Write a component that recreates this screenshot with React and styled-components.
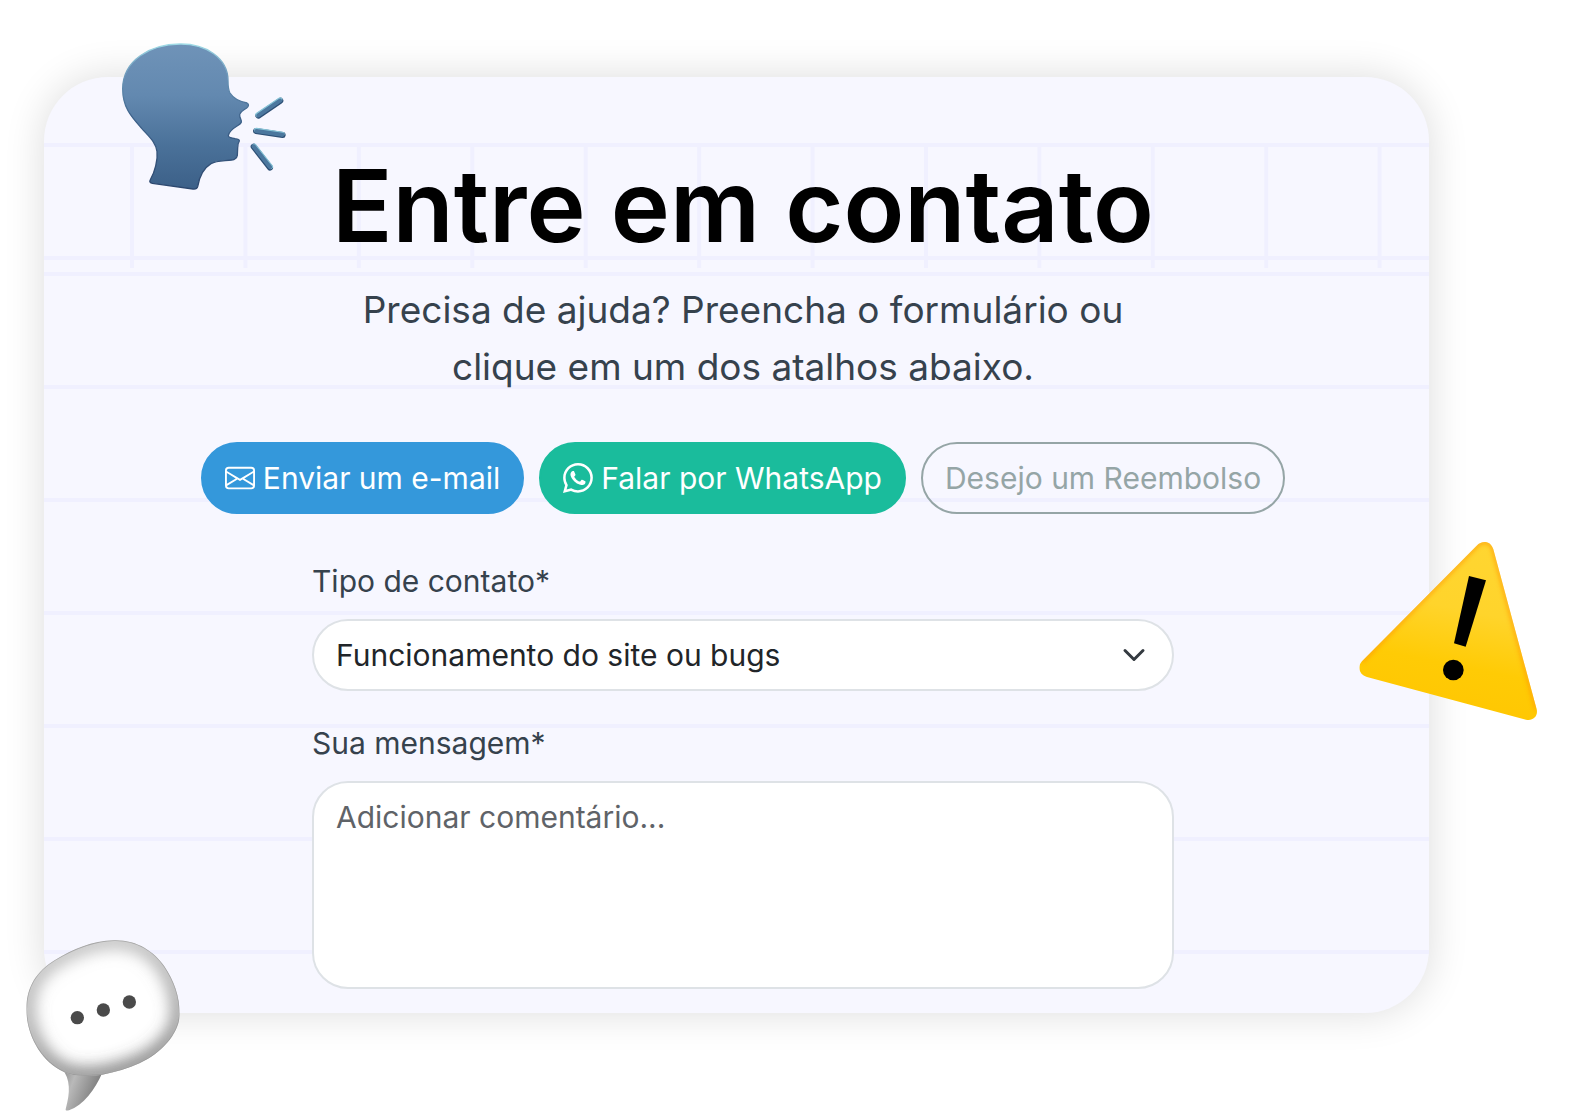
// App.jsx
import React, { useState } from "react";
import styled, { createGlobalStyle } from "styled-components";
import { BsEnvelope, BsWhatsapp } from "react-icons/bs";

const subjects = [
  "Funcionamento do site ou bugs",
  "Dúvidas sobre pagamento",
  "Sugestões",
  "Outros assuntos",
];

function SpeakingHead() {
  return (
    <HeadArt viewBox="300 60 501 456" aria-hidden="true">
      <defs>
        <linearGradient id="headFill" x1="0" y1="0" x2="0" y2="1">
          <stop offset="0" stopColor="#6f93b8" />
          <stop offset="0.35" stopColor="#6389b0" />
          <stop offset="0.7" stopColor="#4a7199" />
          <stop offset="1" stopColor="#3c6088" />
        </linearGradient>
        <linearGradient id="headEdge" x1="0" y1="0" x2="0" y2="1">
          <stop offset="0" stopColor="#9fdbe6" />
          <stop offset="0.2" stopColor="#6f9cbd" />
          <stop offset="0.5" stopColor="#3d628a" />
          <stop offset="1" stopColor="#2c476e" />
        </linearGradient>
      </defs>
      <path
        fill="url(#headFill)"
        stroke="url(#headEdge)"
        strokeWidth="4"
        strokeLinejoin="round"
        d="M480 72C555 71 624 112 624 182C624 202 625 210 630 219C640 235 662 245 681 249C688 252 686 259 680 264C671 271 661 274 659 283C658 294 665 298 664 306C661 318 631 322 625 346C624 354 636 353 645 356C655 358 659 360 658 363C654 369 653 374 653 384L652 406C650 415 644 419 635 420C612 423 590 421 573 431C550 445 538 470 533 500C531 507 527 508 519 507L397 490C388 488 388 484 392 477C404 456 414 420 411 394C407 366 388 351 365 325C336 292 308 264 308 206C309 120 390 73 480 72Z"
      />
      <g strokeLinecap="round">
        <g stroke="#2e5076" strokeWidth="18">
          <path d="M715 287L781 242M708 333L788 345M701 380L750 443" />
        </g>
        <g stroke="#86c3d6" strokeWidth="14">
          <path d="M713 284L780 239M709 330L787 342M703 378L752 440" />
        </g>
        <g stroke="#4b779e" strokeWidth="12">
          <path d="M715 286L780 242M709 333L787 344M701 379L750 441" />
        </g>
      </g>
    </HeadArt>
  );
}

function WarningSign() {
  return (
    <WarningArt viewBox="55 60 540 546" aria-hidden="true">
      <defs>
        <linearGradient id="signFill" x1="0.6" y1="0" x2="0.4" y2="1">
          <stop offset="0" stopColor="#ffd633" />
          <stop offset="0.4" stopColor="#ffd42b" />
          <stop offset="0.65" stopColor="#ffcb05" />
          <stop offset="1" stopColor="#ffc400" />
        </linearGradient>
        <clipPath id="signClip">
          <path d="M411 77C428 59 454 63 461 88L591 568C596 588 580 604 559 599L82 471C59 465 52 440 67 424Z" />
        </clipPath>
        <filter id="signBlur">
          <feGaussianBlur stdDeviation="7" />
        </filter>
      </defs>
      <g clipPath="url(#signClip)">
        <path fill="url(#signFill)" d="M0 0H660V660H0Z" />
        <path
          fill="none"
          stroke="#ff9d0a"
          strokeWidth="12"
          opacity="0.75"
          filter="url(#signBlur)"
          d="M67 424L411 77C428 59 454 63 461 88L591 568"
        />
      </g>
      <path d="M388 168L439 181L378 380L343 370Z" />
      <circle cx="341" cy="450" r="31" />
    </WarningArt>
  );
}

const balloonShape =
  "M342 62C410 60 462 95 493 140C522 183 539 230 539 283C539 340 485 400 420 430C385 446 345 458 307 465C265 469 225 472 192 457C122 425 79 345 79 268C79 205 108 155 165 121C220 88 275 64 342 62Z";

function SpeechBalloon() {
  return (
    <BalloonArt viewBox="75 55 468 522" aria-hidden="true">
      <defs>
        <clipPath id="balloonClip">
          <path d={balloonShape} />
        </clipPath>
        <linearGradient id="tailFill" x1="0" y1="0" x2="1" y2="0.4">
          <stop offset="0" stopColor="#8a8a8a" />
          <stop offset="0.35" stopColor="#b9b9b9" />
          <stop offset="1" stopColor="#777777" />
        </linearGradient>
        <linearGradient id="balloonEdge" x1="0.2" y1="0" x2="0.5" y2="1">
          <stop offset="0" stopColor="#a8a8a8" />
          <stop offset="0.5" stopColor="#8a8a8a" />
          <stop offset="1" stopColor="#4c4c4c" />
        </linearGradient>
        <filter id="balloonBlur" x="-30%" y="-30%" width="160%" height="160%">
          <feGaussianBlur stdDeviation="25" />
        </filter>
      </defs>
      <path
        fill="url(#tailFill)"
        d="M185 445C213 480 210 520 198 564C195 573 198 574 207 572C250 557 285 510 307 459Z"
      />
      <g clipPath="url(#balloonClip)">
        <path fill="#ffffff" d="M0 0H600V600H0Z" />
        <path
          fill="none"
          stroke="url(#balloonEdge)"
          strokeWidth="34"
          filter="url(#balloonBlur)"
          d={balloonShape}
        />
        <path fill="none" stroke="#8c8c8c" strokeWidth="4" opacity="0.6" d={balloonShape} />
      </g>
      <g fill="#4a4a4a">
        <circle cx="232" cy="294" r="20" />
        <circle cx="310" cy="271" r="20" />
        <circle cx="388" cy="247" r="20" />
      </g>
    </BalloonArt>
  );
}

export default function App() {
  const [subject, setSubject] = useState(subjects[0]);
  const [message, setMessage] = useState("");

  return (
    <>
      <GlobalStyle />
      <Page>
        <Card>
          <TitleBand>
            <Title>Entre em contato</Title>
          </TitleBand>
          <Body>
            <Lead>
              Precisa de ajuda? Preencha o formulário ou
              <br />
              clique em um dos atalhos abaixo.
            </Lead>
            <Shortcuts>
              <Pill type="button" $color="#3498db">
                <BsEnvelope aria-hidden="true" />
                Enviar um e-mail
              </Pill>
              <Pill type="button" $color="#1abc9c">
                <BsWhatsapp aria-hidden="true" />
                Falar por WhatsApp
              </Pill>
              <Pill type="button" $color="#95a5a6" $outline>
                Desejo um Reembolso
              </Pill>
            </Shortcuts>
            <Form onSubmit={(e) => e.preventDefault()}>
              <Field>
                <Label htmlFor="subject">Tipo de contato*</Label>
                <SelectWrap>
                  <Select id="subject" value={subject} onChange={(e) => setSubject(e.target.value)}>
                    {subjects.map((item) => (
                      <option key={item}>{item}</option>
                    ))}
                  </Select>
                  <Chevron viewBox="0 0 16 16" aria-hidden="true">
                    <path d="m2 5 6 6 6-6" />
                  </Chevron>
                </SelectWrap>
              </Field>
              <Field>
                <Label htmlFor="message">Sua mensagem*</Label>
                <TextArea
                  id="message"
                  placeholder="Adicionar comentário..."
                  value={message}
                  onChange={(e) => setMessage(e.target.value)}
                />
              </Field>
            </Form>
          </Body>
          <SpeakingHead />
          <WarningSign />
          <SpeechBalloon />
        </Card>
      </Page>
    </>
  );
}

const GlobalStyle = createGlobalStyle`
  * {
    box-sizing: border-box;
  }

  body {
    margin: 0;
    background: #fff;
    color: #36424d;
    font-family: Inter, "Liberation Sans", sans-serif;
    font-size: 30px;
    line-height: 45px;
  }

  button, select, textarea {
    font: inherit;
  }
`;

const Page = styled.main`
  padding: 77px 150px 105px 44px;
`;

const Card = styled.section`
  position: relative;
  padding: 66px 0 24px;
  border-radius: 64px;
  background-color: #f7f7ff;
  box-shadow: 0 0 40px rgba(0, 0, 0, 0.14);
`;

const TitleBand = styled.header`
  padding-left: 13px;
  background-image:
    linear-gradient(#f0f0ff 4px, transparent 4px),
    linear-gradient(90deg, #f0f0ff 4px, transparent 4px);
  background-size: 100% 113px, 8.19% 100%;
  background-position: 0 0, 86px 0;
`;

const Title = styled.h1`
  margin: 0;
  color: #000;
  font-size: 100px;
  font-weight: 600;
  line-height: 125px;
  text-align: center;
`;

const Body = styled.div`
  display: flex;
  flex-direction: column;
  align-items: center;
  padding: 13px 0 0 13px;
  background-image: linear-gradient(#f0f0ff 4px, transparent 4px);
  background-size: 100% 113px;
  background-position: 0 4px;
`;

const Lead = styled.p`
  margin: 0 0 47px;
  font-size: 37px;
  line-height: 57px;
  text-align: center;
`;

const Shortcuts = styled.div`
  display: flex;
  flex-wrap: wrap;
  justify-content: center;
  gap: 15px;
  margin-bottom: 45px;
`;

const Pill = styled.button`
  display: flex;
  align-items: center;
  gap: 8px;
  height: 72px;
  padding: 0 22px;
  border: 2px solid ${({ $color }) => $color};
  border-radius: 36px;
  background: ${({ $color, $outline }) => ($outline ? "transparent" : $color)};
  color: ${({ $color, $outline }) => ($outline ? $color : "#fff")};
  cursor: pointer;
`;

const Form = styled.form`
  display: flex;
  flex-direction: column;
  gap: 30px;
  width: 100%;
  max-width: 862px;
`;

const Field = styled.div`
  display: flex;
  flex-direction: column;
  gap: 15px;
`;

const Label = styled.label`
  display: block;
`;

const SelectWrap = styled.div`
  position: relative;
`;

const Select = styled.select`
  display: block;
  width: 100%;
  height: 72px;
  padding: 0 70px 0 22px;
  border: 2px solid #dee2e6;
  border-radius: 36px;
  background: #fff;
  color: #212529;
  appearance: none;
`;

const Chevron = styled.svg`
  position: absolute;
  top: 24px;
  right: 28px;
  width: 24px;
  height: 24px;
  fill: none;
  stroke: #343a40;
  stroke-width: 2;
  stroke-linecap: round;
  stroke-linejoin: round;
  pointer-events: none;
`;

const TextArea = styled.textarea`
  display: block;
  width: 100%;
  height: 208px;
  padding: 12px 22px;
  border: 2px solid #dee2e6;
  border-radius: 36px;
  background: #fff;
  color: #212529;
  resize: none;

  &::placeholder {
    color: #5f6368;
    opacity: 1;
  }
`;

const Sticker = styled.svg`
  position: absolute;
  pointer-events: none;
`;

const HeadArt = styled(Sticker)`
  top: -37px;
  left: 76px;
  width: 167px;
`;

const WarningArt = styled(Sticker)`
  top: 463px;
  right: -109px;
  width: 180px;
`;

const BalloonArt = styled(Sticker)`
  bottom: -99px;
  left: -19px;
  width: 156px;
`;
